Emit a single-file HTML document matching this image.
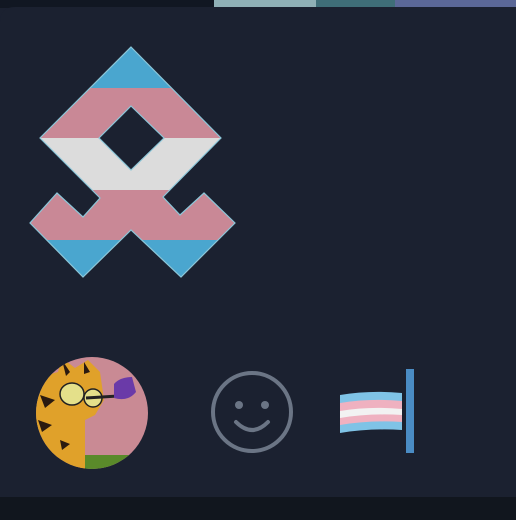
<!DOCTYPE html>
<html><head><meta charset="utf-8"><style>
html,body{margin:0;padding:0;background:#1b2130;width:516px;height:520px;overflow:hidden}
svg{display:block}
</style></head><body>
<svg width="516" height="520" viewBox="0 0 516 520" xmlns="http://www.w3.org/2000/svg">
<defs>
<clipPath id="logo"><polygon points="131,47 221,138 163,197 180,215 204,193 235,223 181,277 131,230 83,277 30,223 57,193 83,217 100,198 40,138"/></clipPath>
<clipPath id="av"><circle cx="92" cy="413" r="56"/></clipPath>
</defs>
<rect width="516" height="520" fill="#1b2130"/>
<rect x="0" y="0" width="516" height="8" fill="#111722"/>
<rect x="214" y="0" width="102" height="7" fill="#8fb0b6"/>
<rect x="316" y="0" width="79" height="7" fill="#3f6e78"/>
<rect x="395" y="0" width="121" height="7" fill="#5b6898"/>
<path d="M0 7 H516 V520 H0 V22 Q0 7 15 7 Z" fill="#1b2130"/>
<rect x="0" y="497" width="516" height="23" fill="#11161e"/>
<g clip-path="url(#logo)">
<rect x="20" y="40" width="230" height="48" fill="#4aa6cf"/>
<rect x="20" y="88" width="230" height="50" fill="#c98896"/>
<rect x="20" y="138" width="230" height="52" fill="#dcdcdc"/>
<rect x="20" y="190" width="230" height="50" fill="#c98896"/>
<rect x="20" y="240" width="230" height="40" fill="#4aa6cf"/>
</g>
<polygon points="131,47 221,138 163,197 180,215 204,193 235,223 181,277 131,230 83,277 30,223 57,193 83,217 100,198 40,138" fill="none" stroke="#8cc6d8" stroke-width="1.2"/>
<polygon points="131,106 164,138 131,170 99,138" fill="#1b2130" stroke="#8cc6d8" stroke-width="1.2"/>
<g clip-path="url(#av)">
<rect x="30" y="350" width="130" height="130" fill="#c98a94"/>
<path d="M30 380 L58 372 L62 358 L75 368 L88 360 L100 372 L104 400 L95 415 L85 420 L85 470 L30 470 Z" fill="#e0a12a"/>
<path d="M62 360 L70 372 L66 376 Z M84 362 L90 372 L84 374 Z M40 395 L55 400 L45 408 Z M38 420 L52 425 L42 432 Z M60 440 L70 444 L62 450 Z" fill="#2a1a10"/>
<ellipse cx="72" cy="394" rx="12" ry="11" fill="#e4e08a" stroke="#222" stroke-width="1.5"/>
<ellipse cx="93" cy="398" rx="9" ry="9" fill="#e4e08a" stroke="#222" stroke-width="1.5"/>
<path d="M86 398 L118 396" stroke="#222" stroke-width="3"/>
<path d="M114 384 Q120 377 132 377 L136 392 Q128 402 114 398 Z" fill="#6a3aa8"/>
<rect x="85" y="455" width="80" height="20" fill="#5a8a2a"/>
</g>
<circle cx="252" cy="412" r="39" fill="none" stroke="#6b7585" stroke-width="4"/>
<circle cx="239" cy="405" r="4" fill="#6b7585"/>
<circle cx="265" cy="405" r="4" fill="#6b7585"/>
<path d="M236 422 Q252 438 268 422" fill="none" stroke="#6b7585" stroke-width="4" stroke-linecap="round"/>
<g>
<path d="M340 395 Q370 390 402 393 L402 430 Q370 428 340 433 Z" fill="#7fc3e6"/>
<path d="M340 403 Q370 398 402 401 L402 422 Q370 420 340 425 Z" fill="#efb1c0"/>
<path d="M340 411 Q370 406 402 409 L402 415 Q370 413 340 418 Z" fill="#f2f2f2"/>
</g>
<rect x="406" y="369" width="8" height="84" fill="#4a8cc4"/>
</svg>
</body></html>
